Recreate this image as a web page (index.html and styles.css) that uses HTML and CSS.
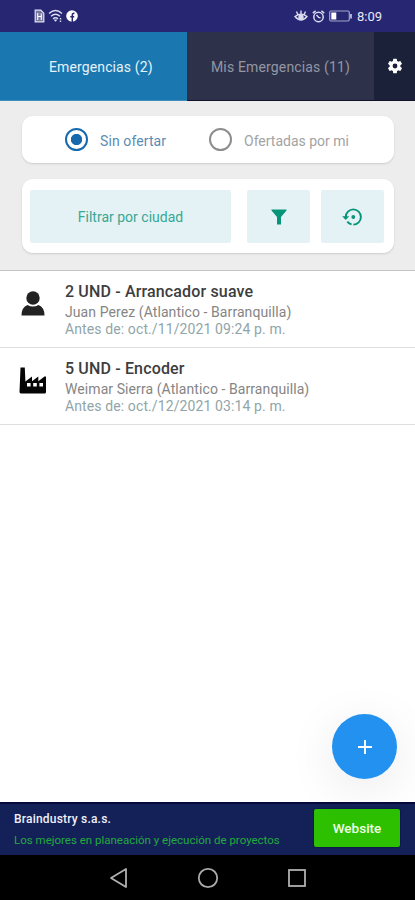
FILE: index.html
```html
<!DOCTYPE html>
<html lang="es">
<head>
<meta charset="utf-8">
<title>Emergencias</title>
<link rel="stylesheet" href="styles.css">
</head>
<body>
<div class="app">
  <header class="status">
    <div class="status-left">
      <svg width="11" height="14" viewBox="0 0 11 14"><path d="M1.2 1.2h5.6l3 3v8.6H1.2z" fill="#77789f" stroke="#e4e4f2" stroke-width="1.2"/><path d="M3.7 4v7M7.3 4.5v6.5M3.700 7.500h3.600" stroke="#fff" stroke-width="1.1"/></svg>
      <svg width="15" height="14" viewBox="0 0 15 14" fill="none" stroke="#dcdcf0" stroke-width="1.4"><path d="M1 4.5q6.5-5.8 13 0M3 7.2q4.500-4 9 0M5 9.700q2.500-2 5 0"/><path d="M5.500 10.500h4l-2 2.200z" fill="#dcdcf0" stroke="none"/><path d="M12.500 9v4" stroke-dasharray="1.500 1"/></svg>
      <svg width="12" height="12" viewBox="0 0 12 12"><circle cx="6" cy="6" r="5.800" fill="#fff"/><path d="M6.300 12V5q0-2 2.200-1.800M4.300 6.800h3.900" fill="none" stroke="#262673" stroke-width="1.500"/></svg>
    </div>
    <div class="status-right">
      <svg width="14" height="12" viewBox="0 0 14 12" fill="none" stroke="#dcdcf0" stroke-width="1.400"><path d="M1 6.500q6-4.500 12 0-6 7-12 0zM2.500 1.500l1.300 3M7 .5v3.500M11.500 1.500l-1.300 3"/><circle cx="7" cy="7.200" r="2" fill="#dcdcf0"/></svg>
      <svg width="13" height="13" viewBox="0 0 13 13" fill="none" stroke="#dcdcf0" stroke-width="1.500"><circle cx="6.500" cy="7" r="4.700"/><path d="M.8 3.200L3.600.9M12.200 3.200L9.400.9M4.500 5l2.200 2.400 1.800.3"/></svg>
      <svg width="24" height="12" viewBox="0 0 24 12"><rect x=".7" y="1" width="19.600" height="10" rx="1.500" fill="none" stroke="#a5a5cc" stroke-width="1.200"/><rect x="2.300" y="2.500" width="5" height="7" fill="#fff"/><path d="M22 4v4.500" stroke="#d0d0e8" stroke-width="1.600"/></svg>
      <span class="clock">8:09</span>
    </div>
  </header>

  <nav class="tabs">
    <div class="tab tab-active"><span>Emergencias (2)</span></div>
    <div class="tab tab-mine"><span>Mis Emergencias (11)</span></div>
    <div class="tab tab-gear">
      <svg width="18" height="18" viewBox="0 0 24 24" fill="#fff"><path d="M19.140 12.940c.04-.3.060-.61.060-.94 0-.32-.02-.64-.07-.94l2.030-1.580a.49.49 0 0 0 .12-.61l-1.920-3.320a.488.488 0 0 0-.59-.22l-2.390.96c-.5-.38-1.030-.7-1.620-.94l-.36-2.540a.484.484 0 0 0-.48-.41h-3.840c-.24 0-.43.17-.47.41l-.36 2.540c-.59.24-1.130.57-1.620.94l-2.390-.96c-.22-.08-.47 0-.59.22L2.740 8.870c-.12.210-.08.470.12.610l2.030 1.580c-.05.3-.09.63-.09.94s.02.640.07.940l-2.030 1.580a.49.49 0 0 0-.12.610l1.920 3.320c.12.220.37.290.59.220l2.390-.96c.5.380 1.030.7 1.620.94l.36 2.540c.05.240.24.410.48.410h3.840c.24 0 .44-.17.47-.41l.36-2.540c.59-.24 1.130-.56 1.620-.94l2.390.96c.22.080.47 0 .59-.22l1.920-3.320c.12-.22.070-.47-.12-.61zM12 15.200A3.200 3.200 0 1 1 12 8.800a3.200 3.200 0 0 1 0 6.400z"/></svg>
    </div>
  </nav>

  <section class="filters">
    <div class="card radios">
      <div class="radio radio-on"><i class="ring"></i><span>Sin ofertar</span></div>
      <div class="radio"><i class="ring"></i><span>Ofertadas por mi</span></div>
    </div>
    <div class="card actions">
      <div class="btn btn-city"><span>Filtrar por ciudad</span></div>
      <div class="btn btn-icon"><svg width="16" height="16" viewBox="0 0 16 16"><path d="M.5.500h15v1L10 8v7.500H6V8L.5 1.500z" fill="#079579"/></svg></div>
      <div class="btn btn-icon"><svg width="21" height="20" viewBox="0 0 21 20"><path d="M3.700 10a7.600 7.600 0 1 1 7.600 7.600M9.600 17.400a7.600 7.600 0 0 1-4.300-2.700" fill="none" stroke="#079579" stroke-width="1.900"/><path d="M.2 9.300h7l-3.500 3.600z" fill="#079579"/><circle cx="11.300" cy="10" r="1.900" fill="#079579"/></svg></div>
    </div>
  </section>

  <main class="list">
    <article class="row">
      <div class="row-icon"><svg width="24" height="25" viewBox="0 0 24 25" fill="#222"><circle cx="12" cy="7" r="6.700"/><path d="M.5 24.500q0-8 6-10.400 5.500 3 11 0 6 2.400 6 10.400z"/></svg></div>
      <div class="row-text">
        <div class="title"><span>2 UND - Arrancador suave</span></div>
        <div class="who"><span>Juan Perez (Atlantico - Barranquilla)</span></div>
        <div class="date"><span>Antes de: oct./11/2021 09:24 p. m.</span></div>
      </div>
    </article>
    <article class="row">
      <div class="row-icon"><svg width="28" height="27" viewBox="0 0 28 27"><path d="M1.500.5h4.300l.6 14 6.600-5v4.700l6.300-4.700v4.700l6.200-4.700H27V25q0 1.500-1.500 1.500h-23Q.5 26.500.5 25z" fill="#050505"/><path d="M8 16h3.600v3.400H8zM14.200 16h3.600v3.400h-3.600zM20.400 16H24v3.400h-3.600z" fill="#fff"/></svg></div>
      <div class="row-text">
        <div class="title"><span>5 UND - Encoder</span></div>
        <div class="who"><span>Weimar Sierra (Atlantico - Barranquilla)</span></div>
        <div class="date"><span>Antes de: oct./12/2021 03:14 p. m.</span></div>
      </div>
    </article>
    <div class="fab"><svg width="14" height="14" viewBox="0 0 14 14"><path d="M7 0v14M0 7h14" stroke="#fff" stroke-width="1.900"/></svg></div>
  </main>

  <footer class="banner">
    <div class="banner-text">
      <div class="brand"><span>Braindustry s.a.s.</span></div>
      <div class="slogan"><span>Los mejores en planeación y ejecución de proyectos</span></div>
    </div>
    <div class="website"><span>Website</span></div>
  </footer>

  <div class="sysnav">
    <svg width="20" height="22" viewBox="0 0 20 22"><path d="M17 2v18L2 11z" fill="none" stroke="#b0b0b0" stroke-width="1.800" stroke-linejoin="round"/></svg>
    <svg width="22" height="22" viewBox="0 0 22 22"><circle cx="11" cy="11" r="9.200" fill="none" stroke="#aaa" stroke-width="1.800"/></svg>
    <svg width="20" height="20" viewBox="0 0 20 20"><rect x="2" y="2" width="16" height="16" fill="none" stroke="#b0b0b0" stroke-width="1.800"/></svg>
  </div>
</div>
</body>
</html>
```
FILE: styles.css
```css
* { box-sizing: border-box; }
body { margin: 0; font-family: Roboto, sans-serif; background: #fff; }
svg { display: block; flex: none; }
span { white-space: nowrap; }
.app { width: 415px; height: 900px; display: flex; flex-direction: column; overflow: hidden; }

.status { height: 32px; flex: none; background: #262673; display: flex; justify-content: space-between; align-items: center; padding: 0 33px 0 34px; }
.status-left, .status-right { display: flex; align-items: center; }
.status-left { gap: 3px; }
.status-right { gap: 4px; }
.clock { font-size: 13px; color: #e8e8f6; }

.tabs { height: 69px; flex: none; display: flex; border-bottom: 1px solid #111128; }
.tab { display: flex; align-items: center; font-size: 14px; }
.tab span { padding-top: 2px; }
.tab-active { width: 187px; height: 69px; background: #1a77b0; border-bottom: 1px solid #3d8dc0; color: #e4f3fc; padding-left: 49px; letter-spacing: 0.12px; }
.tab-mine { width: 187px; background: #2d324a; color: #9496a4; padding-left: 24px; letter-spacing: 0.15px; }
.tab-gear { width: 41px; background: #1a2138; justify-content: center; }

.filters { height: 170px; flex: none; background: #ededed; border-bottom: 1px solid #c4c4c4; padding: 15px 21px 0 22px; display: flex; flex-direction: column; gap: 16px; }
.card { background: #fff; border-radius: 11px; box-shadow: 0 1px 2px #ccc; }
.radios { height: 47px; display: flex; padding-left: 43px; }
.radio { width: 144px; display: flex; align-items: center; gap: 12px; font-size: 14px; color: #a3a3a3; }
.radio span { padding-top: 2px; }
.radio-on { color: #5a8cb4; letter-spacing: 0.1px; }
.ring { width: 23px; height: 23px; flex: none; border: 2px solid #8d8d8d; border-radius: 50%; }
.radio-on .ring { border-color: #1769ae; background: radial-gradient(circle, #1769ae 0 5.300px, #fff 6px); }
.actions { height: 74px; display: flex; padding: 11px 8px; }
.btn { flex: none; background: #e4f2f5; height: 53px; display: flex; align-items: center; justify-content: center; border-radius: 2px; }
.btn-city { width: 201px; margin-right: 16px; color: #38a891; font-size: 14px; }
.btn-icon { width: 63px; margin-right: 11px; }
.btn-icon:last-child { margin-right: 0; }

.list { flex: 1; position: relative; background: #fff; }
.row { height: 77px; display: flex; border-bottom: 1px solid #dedede; padding-top: 11px; }
.row-icon { width: 65px; height: 43px; display: flex; align-items: center; justify-content: center; }
.title { height: 21px; line-height: 20px; font-size: 16px; font-weight: 500; color: #3d3d3d; letter-spacing: 0.15px; }
.who { height: 18px; line-height: 19px; font-size: 14px; color: #858585; letter-spacing: 0.08px; }
.date { height: 17px; line-height: 17px; font-size: 14px; color: #91a5a8; letter-spacing: 0.11px; }
.fab { position: absolute; right: 18px; bottom: 23px; width: 65px; height: 65px; border-radius: 50%; background: #2391f0; display: flex; align-items: center; justify-content: center; box-shadow: 0 10px 50px rgba(0,0,0,.09); }

.banner { height: 53px; flex: none; background: #142159; border-top: 2px solid #07083d; display: flex; justify-content: space-between; padding: 5px 15px 0 14px; }
.brand { height: 21px; line-height: 20px; font-size: 12px; font-weight: 500; color: #f0f0f8; letter-spacing: 0.2px; }
.slogan { height: 20px; line-height: 20px; font-size: 11.5px; color: #22aa3c; }
.website { width: 86px; height: 38px; background: #2dc000; border-radius: 2px; box-shadow: 0 0 2px #03082e; display: flex; align-items: center; justify-content: center; color: #edffe5; font-size: 13.5px; font-weight: 500; }
.sysnav { height: 45px; flex: none; background: #000; display: flex; align-items: center; justify-content: center; gap: 68px; }
```
